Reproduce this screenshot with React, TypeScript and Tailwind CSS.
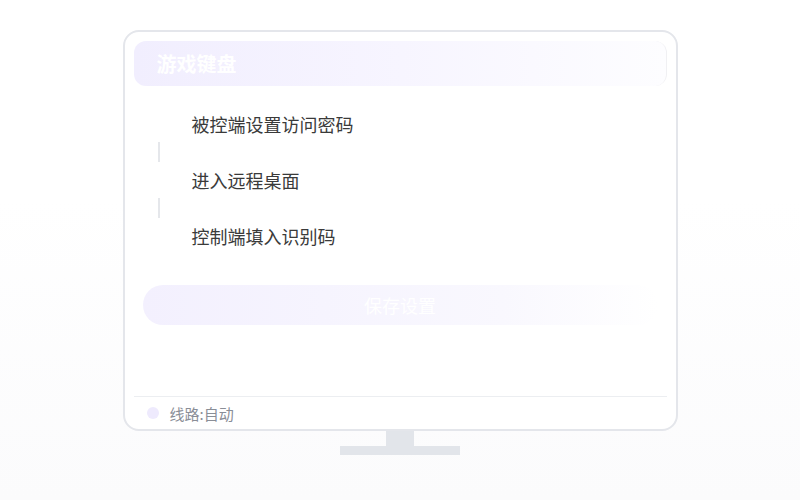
import React from "react";

const steps = ["被控端设置访问密码", "进入远程桌面", "控制端填入识别码"];

export default function App() {
  return (
    <div
      className="w-[800px] h-[500px] flex flex-col items-center pt-[30px] bg-gradient-to-b from-white from-40% to-[#fbfbfc]"
      style={{ fontFamily: '"Noto Sans CJK SC", "Noto Sans", sans-serif' }}
    >
      <div className="w-[555px] h-[401px] border-2 border-[#e4e6eb] rounded-[16px] bg-white p-[9px] pb-0 flex flex-col">
        <div className="h-[45px] shrink-0 rounded-[12px] bg-gradient-to-r from-[#f1eefe] via-[#f7f5ff] to-[#fdfdff] border-r border-[#f0f0f3] flex items-center pl-[23px]">
          <span className="text-white text-[20px] font-bold leading-none">游戏键盘</span>
        </div>

        <div className="mt-[20px] pl-[14px] flex flex-col">
          {steps.map((s, i) => (
            <React.Fragment key={s}>
              {i > 0 && (
                <div className="w-[22px] h-[20px] flex justify-center">
                  <div className="w-[2px] h-full bg-[#e5e7eb]" />
                </div>
              )}
              <div className="h-[36px] flex items-center">
                <div className="w-[22px] h-[22px] shrink-0" />
                <span className="ml-[22px] text-[18px] leading-none text-[#3a3a3a]">{s}</span>
              </div>
            </React.Fragment>
          ))}
        </div>

        <div className="mt-[31px] mx-[9px] h-[40px] rounded-full bg-gradient-to-r from-[#f3f0fe] via-[#f9f8fe] via-70% to-white flex items-center justify-center">
          <span className="text-white text-[18px] leading-none">保存设置</span>
        </div>

        <div className="flex-1" />

        <div className="border-t border-[#eceef1] h-[33px] flex items-center pl-[13px]">
          <div className="w-[12px] h-[12px] rounded-full bg-[#eeeafd]" />
          <span className="ml-[11px] text-[15px] leading-none text-[#8a8e97]">线路:自动</span>
        </div>
      </div>
      <div className="w-[28px] h-[15px] bg-[#e2e5ea]" />
      <div className="w-[120px] h-[9px] bg-[#e2e5ea]" />
    </div>
  );
}
